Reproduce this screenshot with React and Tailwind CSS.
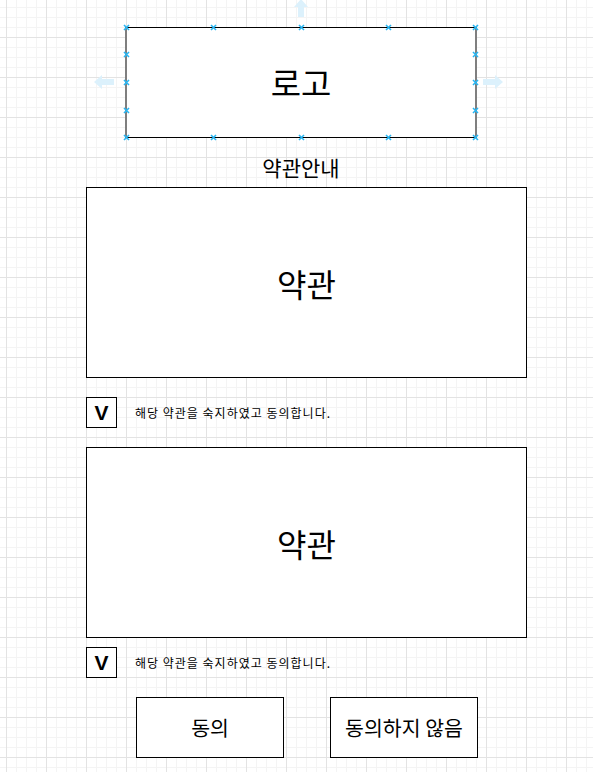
import React from 'react'

const kr = "font-['Noto_Sans_CJK_KR','Noto_Sans',sans-serif]"

function Handle({ x, y }) {
  return (
    <svg className="absolute" style={{ left: x - 3, top: y - 3 }} width="7" height="7" viewBox="0 0 7 7">
      <path d="M1 1L6 6M6 1L1 6" stroke="#29b6f2" strokeWidth="1.6" />
    </svg>
  )
}

function Arrow({ dir, x, y }) {
  const paths = {
    up: 'M8 0L15 8H11V18H5V8H1Z',
    left: 'M0 8L8 1V5H20V11H8V15Z',
    right: 'M20 8L12 1V5H0V11H12V15Z',
  }
  const size = dir === 'up' ? { w: 16, h: 18 } : { w: 20, h: 16 }
  return (
    <svg className="absolute" style={{ left: x, top: y }} width={size.w} height={size.h} viewBox={`0 0 ${size.w} ${size.h}`}>
      <path d={paths[dir]} fill="#dcf1fc" />
    </svg>
  )
}

function Terms() {
  return (
    <div className="w-[441px] h-[191px] border border-black bg-white flex items-center justify-center">
      <span className={`${kr} text-[32px] leading-none text-black`}>약관</span>
    </div>
  )
}

function AgreeRow() {
  return (
    <div className="w-[440px] h-[31px] flex items-center">
      <div className="w-[31px] h-[31px] border border-black bg-white flex items-center justify-center">
        <span className="font-['Liberation_Sans',sans-serif] font-bold text-[21px] leading-none">V</span>
      </div>
      <span className={`${kr} ml-[18px] text-[12px] tracking-[1px] leading-none text-black`}>
        해당 약관을 숙지하였고 동의합니다.
      </span>
    </div>
  )
}

export default function App() {
  const hx = [126, 213, 301, 388, 475]
  const hy = [27, 54, 82, 110, 137]
  return (
    <div className="relative w-[593px] h-[772px] overflow-hidden bg-white bg-[linear-gradient(to_right,#e3e3e3_1px,transparent_1px),linear-gradient(to_bottom,#e3e3e3_1px,transparent_1px),linear-gradient(to_right,#f4f4f4_1px,transparent_1px),linear-gradient(to_bottom,#f4f4f4_1px,transparent_1px)] bg-[size:40px_40px,40px_40px,10px_10px,10px_10px] bg-[position:6px_37px,6px_37px,6px_7px,6px_7px]">
      <div className="flex flex-col items-start pt-[27px] pl-[86px]">
        <div className="ml-[39px] w-[352px] h-[111px] border-y border-black border-x-2 border-x-[#7f7f7f] bg-white flex items-center justify-center">
          <span className={`${kr} text-[33px] leading-none text-black`}>로고</span>
        </div>
        <div className="ml-[40px] w-[350px] h-[49px] flex items-end justify-center pb-[9px]">
          <span className={`${kr} text-[21px] leading-none text-black`}>약관안내</span>
        </div>
        <Terms />
        <div className="h-[19px]" />
        <AgreeRow />
        <div className="h-[19px]" />
        <Terms />
        <div className="h-[9px]" />
        <AgreeRow />
        <div className="h-[19px]" />
        <div className="flex gap-[46px] ml-[50px]">
          <div className="w-[148px] h-[61px] border border-black bg-white flex items-center justify-center">
            <span className={`${kr} text-[20.5px] leading-none`}>동의</span>
          </div>
          <div className="w-[148px] h-[61px] border border-black bg-white flex items-center justify-center">
            <span className={`${kr} text-[20.5px] leading-none`}>동의하지 않음</span>
          </div>
        </div>
      </div>

      {hx.map((x) => (
        <React.Fragment key={'h' + x}>
          <Handle x={x} y={27} />
          <Handle x={x} y={137} />
        </React.Fragment>
      ))}
      {hy.slice(1, 4).map((y) => (
        <React.Fragment key={'v' + y}>
          <Handle x={126} y={y} />
          <Handle x={475} y={y} />
        </React.Fragment>
      ))}
      <Arrow dir="up" x={293} y={-1} />
      <Arrow dir="left" x={94} y={74} />
      <Arrow dir="right" x={483} y={74} />
    </div>
  )
}
